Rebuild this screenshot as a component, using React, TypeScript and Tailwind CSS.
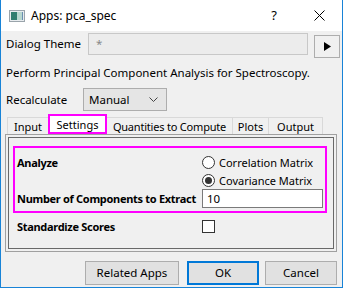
import React from 'react';

const font = { fontFamily: '"Noto Sans", "Liberation Sans", sans-serif' };

function Radio({ checked, label }: { checked?: boolean; label: string }) {
  return (
    <div className="flex h-[18px] items-center gap-[4px]">
      <span className="flex h-[13px] w-[13px] items-center justify-center rounded-full border border-[#333] bg-white">
        {checked && <span className="h-[7px] w-[7px] rounded-full bg-[#333]" />}
      </span>
      <span className="whitespace-nowrap text-[11px]">{label}</span>
    </div>
  );
}

export default function App() {
  return (
    <div
      className="flex h-[288px] w-[343px] flex-col overflow-hidden whitespace-nowrap border-x border-b border-[#1883d7] bg-[#f0f0f0] text-[11.5px] leading-none text-black"
      style={font}
    >
      {/* title bar */}
      <div className="flex h-[31px] shrink-0 items-center bg-white pl-[8px]">
        <svg width="16" height="12" viewBox="0 0 16 12" className="mr-[6px]">
          <rect x="0.5" y="0.5" width="15" height="11" fill="#e8ecef" stroke="#9aa4ab" />
          <rect x="2" y="2" width="6" height="8" fill="#2f7d6f" />
          <rect x="8" y="2" width="5" height="8" fill="#b7d7cf" />
          <rect x="13" y="2" width="1" height="8" fill="#6a8fb0" />
        </svg>
        <span className="text-[12px]">Apps: pca_spec</span>
        <span className="ml-auto mr-[37px] text-[13px]">?</span>
        <svg width="11" height="11" viewBox="0 0 11 11" className="mr-[17px]">
          <path d="M0.5 0.5 L10.5 10.5 M10.5 0.5 L0.5 10.5" stroke="#000" strokeWidth="1" />
        </svg>
      </div>

      {/* dialog theme */}
      <div className="mt-[2px] flex h-[25px] items-start pl-[5px]">
        <span className="flex h-[22px] w-[82px] items-center">Dialog Theme</span>
        <div className="flex h-[22px] w-[220px] items-center border border-[#c8c8c8] bg-[#ececec] pl-[7px] text-[#888]">*</div>
        <div className="ml-[6px] mt-[2px] flex h-[23px] w-[26px] items-center justify-center border border-[#adadad] bg-[#f0f0f0]">
          <svg width="7" height="9" viewBox="0 0 7 9">
            <path d="M0 0 L7 4.5 L0 9 Z" fill="#000" />
          </svg>
        </div>
      </div>

      <div className="mt-[5px] flex h-[20px] items-center pl-[5px]">Perform Principal Component Analysis for Spectroscopy.</div>

      {/* recalculate */}
      <div className="mt-[5px] flex h-[23px] items-center pl-[5px]">
        <span className="w-[77px]">Recalculate</span>
        <div className="flex h-[23px] w-[84px] items-center justify-between border border-[#adadad] bg-[#e5e5e5] pl-[5px] pr-[8px]">
          <span>Manual</span>
          <svg width="9" height="5" viewBox="0 0 9 5">
            <path d="M0.5 0.5 L4.5 4.5 L8.5 0.5" fill="none" stroke="#444" />
          </svg>
        </div>
      </div>

      {/* tabs */}
      <div className="mt-[3px] flex h-[20px] items-end pl-[6px] text-[11px]">
        <div className="flex h-[17px] w-[41px] items-center border-l border-t border-[#d9d9d9] pl-[6px]">Input</div>
        <div className="flex h-[20px] w-[59px] items-center justify-center border-2 border-[#ff00ff] bg-white">Settings</div>
        <div className="flex h-[17px] w-[126px] items-center justify-center border-t border-r border-[#d9d9d9] tracking-[-0.2px]">Quantities to Compute</div>
        <div className="flex h-[17px] w-[36px] items-center justify-center border-t border-r border-[#d9d9d9]">Plots</div>
        <div className="flex h-[17px] w-[54px] items-center justify-center border-t border-r border-[#d9d9d9]">Output</div>
      </div>

      {/* panel */}
      <div className="ml-[4px] mr-[5px] h-[118px] border border-[#a0a0a0] p-[2px]">
        <div className="h-full border border-[#696969] pl-[4px] pr-[6px] pt-[8px]">
          <div className="border-2 border-[#ff00ff] pl-[2px]">
            <div className="flex h-[41px] items-start pt-[5px]">
              <div className="flex h-[18px] w-[185px] items-center text-[11px] font-bold tracking-[-0.3px]">Analyze</div>
              <div>
                <Radio label="Correlation Matrix" />
                <Radio checked label="Covariance Matrix" />
              </div>
            </div>
            <div className="flex h-[22px] items-start">
              <span className="flex h-[19px] w-[185px] items-center text-[11px] font-bold tracking-[-0.3px]">Number of Components to Extract</span>
              <div className="flex h-[19px] w-[121px] items-center border border-[#7a7a7a] bg-white pl-[4px]">10</div>
            </div>
          </div>
          <div className="mt-[6px] flex h-[14px] items-center pl-[4px]">
            <span className="w-[185px] text-[11px] font-bold tracking-[-0.3px]">Standardize Scores</span>
            <span className="h-[13px] w-[13px] border border-[#333] bg-white" />
          </div>
        </div>
      </div>

      {/* buttons */}
      <div className="mt-[9px] flex justify-end pr-[5px]">
        <div className="flex h-[24px] w-[94px] items-center justify-center border border-[#adadad] bg-[#e1e1e1]">Related Apps</div>
        <div className="ml-[8px] flex h-[24px] w-[72px] items-center justify-center border-2 border-[#0078d7] bg-[#e1e1e1]">OK</div>
        <div className="ml-[6px] flex h-[24px] w-[72px] items-center justify-center border border-[#adadad] bg-[#e1e1e1]">Cancel</div>
      </div>
    </div>
  );
}
